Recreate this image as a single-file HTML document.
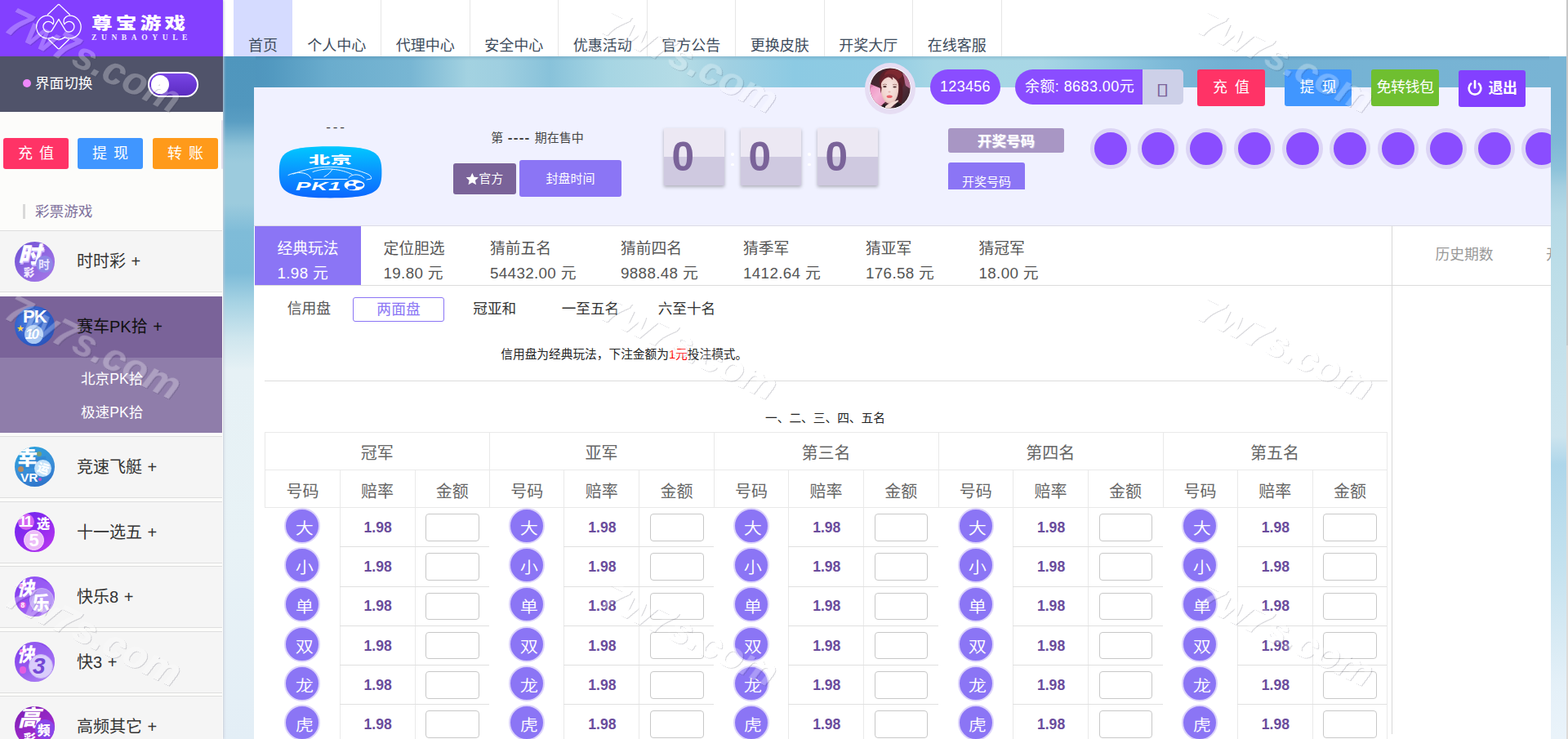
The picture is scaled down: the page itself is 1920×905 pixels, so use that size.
<!DOCTYPE html>
<html lang="zh-CN"><head><meta charset="utf-8"><title>尊宝游戏</title>
<style>
*{box-sizing:border-box;margin:0;padding:0}
html,body{width:1920px;height:905px;overflow:hidden;background:#fff}
body{font-family:"Liberation Sans","Noto Sans CJK SC",sans-serif;color:#333;position:relative}
.abs{position:absolute}
#bg{position:absolute;left:273px;top:69px;width:1647px;height:836px;background:#9fcde0}
#bgt{position:absolute;left:273px;top:69px;width:1647px;height:40px;background:
 linear-gradient(180deg,rgba(40,90,130,.18) 0px,rgba(40,90,130,0) 5px),
 linear-gradient(90deg,#4a8fb8 0px,#5299c0 60px,#6aaccd 130px,#78b6d3 230px,#a3d2e1 300px,#9fcfe0 340px,#88c2da 400px,#a6d5e3 470px,#b5dce6 560px,#a0d0e2 620px,#8ccae3 700px,#8fcbe3 800px,#a6d6e5 870px,#a8d7e5 1000px,#92c9e0 1080px,#7cb9d8 1160px,#72b0d3 1230px,#76b3d4 1400px,#79b4d4 1647px)}
#bgl{position:absolute;left:273px;top:69px;width:40px;height:836px;background:
 linear-gradient(180deg,#4f96bd 0px,#5197be 60px,#5a9ec3 80px,#8fc3d8 110px,#9ccbdd 130px,#9ccbdd 180px,#7fbcd8 215px,#7dbbd8 265px,#a5d2e3 300px,#cfe6ee 345px,#e6f1f5 385px,#e8f2f6 600px,#e3eef6 836px)}
#bgr{position:absolute;left:1897px;top:69px;width:23px;height:836px;background:
 linear-gradient(180deg,#79b4d4 0px,#79b4d4 60px,#7fb8d6 105px,#8cc2da 138px,#a5cfe0 160px,#b5d9e6 193px,#bbdde8 249px,#c3e0ea 340px,#c9e3ed 420px,#cde4ee 465px,#aed6ea 500px,#b9dcec 560px,#c5e2ef 630px,#d5e9f3 700px,#e4f0f8 770px,#eaf3fa 836px)}
#sbar{position:absolute;left:1918px;top:0;width:2px;height:905px;background:#dedbd8;z-index:9}
#sbar i{position:absolute;left:0;top:0;width:2px;height:423px;background:#c8c8c8}
#side{position:absolute;left:0;top:0;width:273px;height:905px;background:#fcfcfa;box-shadow:1px 0 3px rgba(200,202,215,.95);z-index:5}
#logo{position:absolute;left:0;top:0;width:273px;height:69px;background:#8340ff}
#sw{position:absolute;left:0;top:69px;width:273px;height:68px;background:#50536a}
#topnav{position:absolute;left:273px;top:0;width:1647px;height:69px;background:#fff;z-index:2}
.nv{position:absolute;top:0;height:69px;font-size:18px;color:#3d4b5c;line-height:18px;padding-top:46.5px;text-align:center;border-right:1px solid #e6e6e6;white-space:nowrap}
#panel{position:absolute;left:311px;top:107px;width:1588px;height:798px;background:#f0f1ff;z-index:1;overflow:hidden}
.btn{position:absolute;color:#fff;text-align:center;border-radius:3px;white-space:nowrap}
.mi{position:absolute;left:0;width:272px;height:76px;background:#f5f5f5;border-top:1px solid #dedede;border-bottom:1px solid #dedede}
.mi .t{position:absolute;left:94px;top:0;line-height:74px;font-size:20px;color:#333;white-space:nowrap}
.pl{font-size:20px;margin-left:6.5px}
.ball{position:absolute;width:44px;height:44px;border-radius:50%;background:#8b75f5;border:2px solid #dcd3fb;color:#fff;font-size:19.8px;font-weight:350;line-height:43.5px;text-align:center;padding-left:5.4px;font-family:'Noto Sans CJK SC',sans-serif}
.ball span{display:inline-block;transform:scaleX(1.12)}
.wm{position:absolute;width:240px;height:56px;line-height:56px;text-align:center;font-size:48px;font-weight:700;font-style:italic;color:rgba(255,255,255,.26);text-shadow:1px 1px 1px rgba(60,60,80,.055);transform:rotate(29deg);z-index:20;white-space:nowrap;pointer-events:none}
.od{position:absolute;width:92.5px;text-align:center;font-size:17.6px;font-weight:700;line-height:24px;color:#6a4c9c}
.inp{position:absolute;width:65.6px;height:33.6px;border:1px solid #c8c8c8;border-radius:4px;background:#fff}
.ic{position:absolute;left:18px;width:49px;height:49px;border-radius:50%;overflow:hidden}
</style></head>
<body>
<div id="bg"></div><div id="bgt"></div><div id="bgl"></div><div id="bgr"></div><div id="sbar"><i></i></div>
<div id="topnav">
<div class="nv" style="left:13.0px;width:72px;background:#d5dbff;border-right:none">首页</div>
<div class="nv" style="left:85.3px;width:109px">个人中心</div>
<div class="nv" style="left:193.8px;width:109px">代理中心</div>
<div class="nv" style="left:302.3px;width:109px">安全中心</div>
<div class="nv" style="left:410.8px;width:109px">优惠活动</div>
<div class="nv" style="left:519.3px;width:109px">官方公告</div>
<div class="nv" style="left:627.8px;width:109px">更换皮肤</div>
<div class="nv" style="left:736.3px;width:109px">开奖大厅</div>
<div class="nv" style="left:844.8px;width:109px">在线客服</div>
</div>
<div id="side">
<div id="logo">
<svg class="abs" style="left:40px;top:2px" width="64" height="64" viewBox="40 2 64 64" fill="none" stroke="#fff" stroke-width="1.3" stroke-linecap="round" stroke-linejoin="round">
<path d="M58.3 18 L70.7 6.1 Q71.9 5 73.1 6.1 L85.5 18"/>
<path d="M59.4 48.2 L70.7 59.2 Q71.9 60.3 73.1 59.2 L84.4 48.2"/>
<path d="M71.9 23.7 L63.6 37.4 A6.4 6.4 0 1 1 64.9 29.7 C66.3 26.5 66 22.8 62.8 20.6 C61.3 19.6 59.8 19.2 58.5 19.2 A13.9 13.9 0 1 0 64 45.9"/>
<path d="M71.9 23.7 L80.2 37.4 A6.4 6.4 0 1 0 78.9 29.7 C77.5 26.5 77.8 22.8 81 20.6 C82.5 19.6 84 19.2 85.3 19.2 A13.9 13.9 0 1 1 79.8 45.9"/>
<path d="M64.2 45.4 Q71.9 51.6 79.6 45.4" stroke-width="1.7"/>
</svg>
<div class="abs" style="left:112px;top:12px;font-family:'Noto Sans CJK SC','Liberation Sans',sans-serif;font-weight:900;font-size:20.5px;line-height:30px;letter-spacing:3.4px;color:#fff;white-space:nowrap;transform:scaleX(1.25);transform-origin:0 50%">尊宝游戏</div>
<div class="abs" style="left:112px;top:39px;font-family:'Liberation Serif',serif;font-weight:700;font-size:9.5px;line-height:14px;letter-spacing:5.6px;color:#f0e8ff;white-space:nowrap">ZUNBAOYULE</div>
</div>
<div id="sw">
<div class="abs" style="left:28px;top:28px;width:10px;height:10px;border-radius:50%;background:#ee88fa"></div>
<div class="abs" style="left:43px;top:20px;font-size:17.6px;line-height:26px;color:#fff;white-space:nowrap">界面切换</div>
<div class="abs" style="left:181px;top:19px;width:62px;height:31px;border-radius:16px;border:2px solid #fff;background:linear-gradient(180deg,#7a46e6 0%,#6a38d4 50%,#5b2cc0 100%)"><div class="abs" style="left:2px;top:2px;width:22px;height:23px;border-radius:50%;background:#fff"></div></div>
</div>

<div class="abs" style="left:271px;top:147px;width:2px;height:60px;background:#e4e0ee;border-radius:1px"></div>
<div class="btn" style="left:4px;top:169px;width:80px;height:38px;line-height:38px;font-size:18px;letter-spacing:1.5px;padding-left:1.5px;background:#ff3366">充 值</div>
<div class="btn" style="left:95px;top:169px;width:80px;height:38px;line-height:38px;font-size:18px;letter-spacing:1.5px;padding-left:1.5px;background:#4096ff">提 现</div>
<div class="btn" style="left:187px;top:169px;width:80px;height:38px;line-height:38px;font-size:18px;letter-spacing:1.5px;padding-left:1.5px;background:#ff9a1a">转 账</div>
<div class="abs" style="left:28px;top:250px;width:3px;height:18px;background:#d9d9d9"></div>
<div class="abs" style="left:43px;top:246px;font-size:17.6px;line-height:26px;color:#7d6f9b;white-space:nowrap">彩票游戏</div>

<div class="mi" style="top:282px"><div class="ic" style="top:12.8px;background:linear-gradient(135deg,#6a4fd0 0%,#8e66e0 50%,#a77ae8 100%)"><span class="abs" style="left:4px;top:-2px;font-size:28px;line-height:32px;font-weight:900;font-style:italic;color:#fff;font-family:'Noto Sans CJK SC',sans-serif;text-shadow:1px 2px 0 #c9b6ff">时</span><span class="abs" style="left:26px;top:17px;width:21px;height:21px;border-radius:50%;background:#8f86e6"></span><span class="abs" style="left:29px;top:19px;font-size:14px;line-height:18px;font-weight:700;color:#e8e4ff">时</span><span class="abs" style="left:11px;top:31px;font-size:13px;line-height:14px;font-weight:900;color:#f3eaff">彩</span></div><div class="t">时时彩<span class="pl">+</span></div></div>
<div class="mi" style="top:363px;height:76px;background:#7a6399;border:none"><div class="ic" style="top:11.5px;background:radial-gradient(circle at 40% 40%,#4a7ee0 0%,#2f5ec8 55%,#2448a8 100%)"><span class="abs" style="left:10px;top:0px;font-size:22px;line-height:26px;font-weight:700;color:#fff;letter-spacing:-1px">PK</span><span class="abs" style="left:12px;top:23.5px;width:23px;height:23px;border-radius:50%;background:#a9c8f3"></span><span class="abs" style="left:13px;top:25.5px;font-size:17px;line-height:20px;font-weight:700;font-style:italic;color:#fff;letter-spacing:-2px">10</span><span class="abs" style="left:2.5px;top:22px;font-size:9px;line-height:10px;color:#ffd84a">★</span></div><div class="t" style="color:#111;line-height:74px">赛车PK拾<span class="pl">+</span></div></div>
<div class="abs" style="left:0;top:438px;width:272px;height:92px;background:#8f7daa"></div>
<div class="abs" style="left:99px;top:451px;font-size:17.6px;line-height:26px;color:#fff;white-space:nowrap">北京PK拾</div>
<div class="abs" style="left:99px;top:491.5px;font-size:17.6px;line-height:26px;color:#fff;white-space:nowrap">极速PK拾</div>
<div class="mi" style="top:534.0px"><div class="ic" style="top:12.2px;background:linear-gradient(160deg,#2aa4dc 0%,#3a8ed8 55%,#2a6cc6 100%)"><span class="abs" style="left:5px;top:14px;width:34px;height:12px;background:#2f7fd0;opacity:.55;transform:rotate(-8deg)"></span><span class="abs" style="left:27px;top:6px;width:6px;height:6px;border-radius:50%;background:#8aa060;opacity:.8"></span><span class="abs" style="left:4px;top:23.5px;width:7px;height:7px;border-radius:50%;background:#c88a50;opacity:.85"></span><span class="abs" style="left:29px;top:37.5px;width:4.4px;height:4.4px;border-radius:50%;background:#c050c8"></span><span class="abs" style="left:3px;top:-3px;font-size:25px;line-height:28px;font-weight:900;color:#fff;font-family:'Noto Sans CJK SC',sans-serif">幸</span><span class="abs" style="left:23.8px;top:15.5px;width:21.6px;height:21.6px;border-radius:50%;background:#c4e2fa"></span><span class="abs" style="left:27.5px;top:18px;font-size:14.5px;line-height:16px;font-weight:900;color:#fff;transform:rotate(18deg);font-family:'Noto Sans CJK SC',sans-serif">运</span><span class="abs" style="left:7px;top:29.5px;font-size:15.5px;line-height:16px;font-weight:700;color:#fff">VR</span></div><div class="t">竞速飞艇<span class="pl">+</span></div></div>
<div class="mi" style="top:613.5px"><div class="ic" style="top:12.2px;background:linear-gradient(140deg,#6a28f0 0%,#8a28ee 45%,#c038f0 100%)"><span class="abs" style="left:4.4px;top:2.1px;width:20px;height:20px;border-radius:50%;background:#d264f2"></span><span class="abs" style="left:4.5px;top:2px;font-size:19px;line-height:20px;font-weight:700;color:#fff;letter-spacing:-2.2px">11</span><span class="abs" style="left:27px;top:4.5px;font-size:16px;line-height:18px;font-weight:900;color:#fff;font-family:'Noto Sans CJK SC',sans-serif">选</span><span class="abs" style="left:11.3px;top:22.1px;width:24.8px;height:24.8px;border-radius:50%;background:#ecbcf8;border:1.5px solid #f6dcfc"></span><span class="abs" style="left:17.5px;top:23px;font-size:22px;line-height:24px;font-weight:700;color:#fff">5</span></div><div class="t">十一选五<span class="pl">+</span></div></div>
<div class="mi" style="top:693.0px"><div class="ic" style="top:12.2px;background:linear-gradient(150deg,#7a30ee 0%,#9450f2 50%,#ae7cf6 100%)"><span class="abs" style="left:6px;top:6px;width:60px;height:14px;background:#a470f8;opacity:.45;transform:rotate(30deg)"></span><span class="abs" style="left:3px;top:0px;font-size:23px;line-height:26px;font-weight:900;font-style:italic;color:#fff;font-family:'Noto Sans CJK SC',sans-serif;transform:scaleX(.9);transform-origin:0 0">快</span><span class="abs" style="left:17.5px;top:13.5px;width:30px;height:30px;border-radius:50%;background:#b898f6;border:1.5px solid #c9b0f8"></span><span class="abs" style="left:21.5px;top:19px;font-size:21.5px;line-height:24px;font-weight:900;color:#fff;font-family:'Noto Sans CJK SC',sans-serif">乐</span><span class="abs" style="left:5.6px;top:30.6px;width:8.6px;height:8.6px;border-radius:50%;background:#e45ce0"></span><span class="abs" style="left:7.6px;top:30.4px;font-size:8.5px;line-height:9px;font-weight:700;color:#fff">8</span><span class="abs" style="left:5.5px;top:8.5px;width:4.6px;height:4.6px;border-radius:50%;background:#f07ae0"></span></div><div class="t">快乐8<span class="pl">+</span></div></div>
<div class="mi" style="top:772.5px"><div class="ic" style="top:12.2px;background:linear-gradient(150deg,#7a36ea 0%,#9458ee 50%,#b088f4 100%)"><span class="abs" style="left:6px;top:6px;width:60px;height:14px;background:#a476f6;opacity:.45;transform:rotate(30deg)"></span><span class="abs" style="left:3px;top:1px;font-size:23px;line-height:26px;font-weight:900;font-style:italic;color:#fff;font-family:'Noto Sans CJK SC',sans-serif;transform:scaleX(.9);transform-origin:0 0">快</span><span class="abs" style="left:16.5px;top:15.5px;width:30px;height:30px;border-radius:50%;background:#dacdfb;border:1.5px solid #c4b0f6"></span><span class="abs" style="left:22px;top:15.5px;font-size:28px;line-height:30px;font-weight:700;font-style:italic;color:#7448d6">3</span><span class="abs" style="left:5.6px;top:30.6px;width:8.6px;height:8.6px;border-radius:50%;background:#e45ce0"></span><span class="abs" style="left:5.5px;top:9px;width:4.6px;height:4.6px;border-radius:50%;background:#f07ae0"></span></div><div class="t">快3<span class="pl">+</span></div></div>
<div class="mi" style="top:851.5px"><div class="ic" style="top:12.2px;background:linear-gradient(150deg,#7a1cb0 0%,#9a28c8 55%,#b040d8 100%)"><span class="abs" style="left:4px;top:-2px;font-size:27.5px;line-height:28px;font-weight:900;font-style:italic;color:#fff;font-family:'Noto Sans CJK SC',sans-serif">高</span><span class="abs" style="left:24.5px;top:16px;width:24px;height:24px;border-radius:50%;background:#8846e8"></span><span class="abs" style="left:28px;top:19px;font-size:15.5px;line-height:18px;font-weight:900;color:#fff;font-family:'Noto Sans CJK SC',sans-serif">频</span><span class="abs" style="left:11px;top:30px;font-size:15px;line-height:17px;font-weight:900;color:#fff;font-family:'Noto Sans CJK SC',sans-serif">彩</span></div><div class="t">高频其它<span class="pl">+</span></div></div>
</div>

<div id="ubar" class="abs" style="left:0;top:0;width:1920px;height:0;z-index:3">
<div class="abs" style="left:1059px;top:77.3px;width:62px;height:62.5px;border-radius:50%;background:#e6ddf3"></div>
<svg class="abs" style="left:1064px;top:82.3px" width="52" height="52" viewBox="-1 -1 52 52">
<defs><clipPath id="avc"><circle cx="25" cy="25" r="24.6"/></clipPath>
<linearGradient id="avb" x1="0" y1="0" x2="1" y2="1"><stop offset="0" stop-color="#3a2229"/><stop offset=".35" stop-color="#4a2832"/><stop offset=".6" stop-color="#5a2f3c"/><stop offset="1" stop-color="#2c2026"/></linearGradient>
<linearGradient id="avp" x1="0" y1="0" x2="1" y2="1"><stop offset="0" stop-color="#f08cc0"/><stop offset=".5" stop-color="#f4b4d6"/><stop offset="1" stop-color="#e890b8"/></linearGradient>
<radialGradient id="avf" cx=".5" cy=".45" r=".6"><stop offset="0" stop-color="#f8e6e2"/><stop offset=".7" stop-color="#f1d4ce"/><stop offset="1" stop-color="#e2b2ac"/></radialGradient></defs>
<circle cx="25" cy="25" r="25.6" fill="#fff"/>
<g clip-path="url(#avc)">
<rect x="0" y="0" width="50" height="50" fill="url(#avb)"/>
<path d="M-2 19 L13 25 L20 41 L10 50 L-2 50 Z" fill="url(#avp)"/>
<path d="M-2 19 L13 25 L5 22 L-2 27 Z" fill="#c96a9a" opacity=".6"/>
<path d="M40 6 L50 14 L50 26 L44 22 Z" fill="#c77aa2" opacity=".85"/>
<ellipse cx="27" cy="16" rx="15.5" ry="15" fill="#5c2029"/>
<ellipse cx="29" cy="8.5" rx="11" ry="6.5" fill="#8a2c34" opacity=".75"/>
<path d="M36 16 C42 21 41 35 38.5 44 L34.5 40 Z" fill="#4e1c25"/>
<path d="M13.8 21 C13.2 30 15.2 38 19.6 42 C22.6 44.6 26.6 44.6 29.6 42 C34 38 35.8 30 35.2 21 C34.7 12 28 9.5 24.5 9.5 C21 9.5 14.3 12 13.8 21 Z" fill="url(#avf)"/>
<path d="M13 21 C13 12 18.5 7 25 7.5 C31.5 8 36 12 36.2 21.5 C34 16.5 31.5 12.8 27.5 11.5 C28 12.5 28.5 14 28 15 C26.5 13 24.5 11.8 22.5 11.6 C18.5 12.5 15 16 13 21 Z" fill="#6a242d"/>
<path d="M13.2 21 C12.6 25 13 29 13.8 31.5 L14.6 24 Z" fill="#6a242d"/>
<ellipse cx="18.4" cy="23.2" rx="2.2" ry="1.1" fill="#5a3a3a"/><ellipse cx="30.6" cy="23.5" rx="2.2" ry="1.1" fill="#5a3a3a"/>
<path d="M15.8 20.8 Q18.5 19.6 21 20.6 M28 20.8 Q30.8 19.8 33.4 21" stroke="#8a5a56" stroke-width=".7" fill="none"/>
<ellipse cx="24" cy="29.6" rx="1.6" ry="1" fill="#e2b6ae"/>
<ellipse cx="24.2" cy="35.3" rx="3.6" ry="1.8" fill="#e8666c"/>
<path d="M30 50 L33 42 L41 46 L46 50 Z" fill="#231c20"/>
<path d="M14 50 L17 44 L22 46 L20 50 Z" fill="#231c20"/>
<path d="M19 47 C24 43 30 41 35 39.5 C36 41 33 43 30 45 C28 47 26 49 24 50 L19 50 Z" fill="#f3d9d3"/>
<path d="M5 40 C7 42 9 45 9 48 L6 47 Z" fill="#f5d6d8"/>
</g></svg>
<div class="abs" style="left:1139px;top:85px;width:86px;height:43px;border-radius:22px;background:#8a4dff;color:#fff;font-size:18px;line-height:43px;text-align:center;letter-spacing:0.3px">123456</div>
<div class="abs" style="left:1243px;top:85px;width:156px;height:43px;border-radius:22px 0 0 22px;background:#8a4dff;color:#fff;font-size:18px;line-height:43px;padding-left:12px;white-space:nowrap;letter-spacing:0.42px">余额: 8683.00元</div>
<div class="abs" style="left:1399px;top:85px;width:50px;height:43px;border-radius:0 5px 5px 0;background:#cdd0e8"></div>
<div class="abs" style="left:1413px;top:98.5px;width:21px;height:22px;line-height:22px;text-align:center;font-family:'DejaVu Sans',sans-serif;font-size:19.8px;color:#7a6399;transform:scaleX(1.5)">▯</div>
<div class="btn" style="left:1466px;top:85px;width:83px;height:45px;line-height:45px;font-size:18px;letter-spacing:2px;padding-left:2px;background:#ff3366">充 值</div>
<div class="btn" style="left:1573px;top:85px;width:82px;height:45px;line-height:45px;font-size:18px;letter-spacing:2px;padding-left:2px;background:#4096ff">提 现</div>
<div class="btn" style="left:1679px;top:85px;width:83px;height:45px;line-height:45px;font-size:18px;background:#6fbf30;letter-spacing:-0.5px">免转钱包</div>
<div class="btn" style="left:1786px;top:86px;width:82px;height:45px;line-height:44px;font-size:18px;font-weight:700;background:#8340ff;padding-left:26px;letter-spacing:-0.5px">退出
<svg class="abs" style="left:9px;top:11px" width="22" height="22" viewBox="0 0 22 22" fill="none" stroke="#fff" stroke-width="2.6" stroke-linecap="round"><path d="M6.2 5.6 A7.4 7.4 0 1 0 15.8 5.6"/><path d="M11 2.2 V10.5"/></svg>
</div>
</div>

<div id="panel">
<div class="abs" style="left:81px;top:41px;width:40px;text-align:center;font-size:17px;line-height:16px;letter-spacing:2.8px;color:#444;white-space:nowrap">---</div>
<svg class="abs" style="left:30px;top:71px" width="128" height="66" viewBox="0 0 128 66">
<defs><linearGradient id="pkg" x1="0" y1="0" x2="0" y2="1"><stop offset="0" stop-color="#00c8ff"/><stop offset=".5" stop-color="#0a94ff"/><stop offset="1" stop-color="#0a66ff"/></linearGradient></defs>
<path fill="url(#pkg)" d="M0.8 32.8 C0.8 9.5 7 1.2 63.6 1.2 C120.2 1.2 126.4 9.5 126.4 32.8 C126.4 56.1 120.2 64.4 63.6 64.4 C7 64.4 0.8 56.1 0.8 32.8 Z"/>
<text x="63.5" y="21.6" text-anchor="middle" fill="#fff" font-family="Noto Sans CJK SC,sans-serif" font-weight="900" font-size="13" transform="translate(63.5 0) scale(2.04 1) translate(-63.5 0)">北京</text>
<g fill="none" stroke="#e6f5ff" stroke-width="1" stroke-linecap="round" stroke-linejoin="round"><path d="M12 36.5 C20 32.5 30 32.5 36 36 C38 37.3 39 38.6 39.5 40"/><path d="M18 35 C36 28 52 25.5 70 26.5 C86 27.4 100 31 110 35.5 C113 37 114 39 113.5 41 L108 42"/><path d="M43 41.5 H84"/><path d="M86 39.5 C90 34.5 100 34.5 105 40"/><path d="M42 32.5 C52 28.8 62 28.5 66 29.2 C64 32.5 61 36 56 38.5"/><path d="M66 29.2 C76 30 84 32.5 90 35.5"/></g>
<text x="21.5" y="55.2" fill="#fff" font-family="Liberation Sans,sans-serif" font-weight="700" font-style="italic" font-size="15.4" letter-spacing=".4" transform="translate(22 0) scale(1.8 1) translate(-22 0)">PK1</text>
<ellipse cx="93" cy="48.8" rx="12.4" ry="6.5" fill="#fff"/>
<ellipse cx="89" cy="45.6" rx="3.2" ry="1.7" fill="#0a76ff"/><ellipse cx="99.2" cy="48.2" rx="4.6" ry="2.5" fill="#0a72ff"/><ellipse cx="89.6" cy="51.8" rx="5" ry="2.5" fill="#0a70ff"/>
</svg>
<div class="abs" style="left:232px;top:51px;width:230px;text-align:center;font-size:15px;line-height:22px;color:#444;white-space:nowrap">第 <b style="letter-spacing:1.3px;margin-left:1.3px;margin-right:1px;font-size:17px;line-height:15px">----</b> 期在售中</div>
<div class="btn" style="left:244px;top:93px;width:77px;height:38px;line-height:37px;font-size:15px;background:#7a6399"><svg width="16.5" height="16.5" viewBox="0 0 20 20" style="vertical-align:-3px;margin-right:0px;margin-left:-1px"><path fill="#fff" d="M10 0.8l2.7 6.1 6.6 0.7-4.9 4.5 1.4 6.5L10 15.3 4.2 18.6l1.4-6.5L0.7 7.6l6.6-0.7z"/></svg>官方</div>
<div class="btn" style="left:325px;top:89px;width:125px;height:45px;line-height:45px;font-size:15px;background:#8b75f5">封盘时间</div>
<div class="abs" style="left:501.7px;top:49.7px;width:74.6px;height:70.6px;background:linear-gradient(180deg,#ece8f3 0%,#ece8f3 49.5%,#cfc9e0 49.5%,#cfc9e0 100%);box-shadow:0 2px 4px rgba(0,0,0,.28);font-size:49.5px;font-weight:700;color:#7a6399;line-height:70px;padding-left:9.8px">0</div>
<div class="abs" style="left:595.7px;top:49.7px;width:74.6px;height:70.6px;background:linear-gradient(180deg,#ece8f3 0%,#ece8f3 49.5%,#cfc9e0 49.5%,#cfc9e0 100%);box-shadow:0 2px 4px rgba(0,0,0,.28);font-size:49.5px;font-weight:700;color:#7a6399;line-height:70px;padding-left:9.8px">0</div>
<div class="abs" style="left:689.7px;top:49.7px;width:74.6px;height:70.6px;background:linear-gradient(180deg,#ece8f3 0%,#ece8f3 49.5%,#cfc9e0 49.5%,#cfc9e0 100%);box-shadow:0 2px 4px rgba(0,0,0,.28);font-size:49.5px;font-weight:700;color:#7a6399;line-height:70px;padding-left:9.8px">0</div>
<div class="abs" style="left:584.0px;top:80.2px;width:3.6px;height:3.6px;border-radius:50%;background:#fff"></div>
<div class="abs" style="left:584.0px;top:92.9px;width:3.6px;height:3.6px;border-radius:50%;background:#fff"></div>
<div class="abs" style="left:678.0px;top:80.2px;width:3.6px;height:3.6px;border-radius:50%;background:#fff"></div>
<div class="abs" style="left:678.0px;top:92.9px;width:3.6px;height:3.6px;border-radius:50%;background:#fff"></div>
<div class="btn" style="left:850px;top:50px;width:142px;height:30px;line-height:32px;font-size:17.6px;font-weight:700;background:#a896c4;text-shadow:1px 1px 1px rgba(255,255,255,.5)">开奖号码</div>
<div class="btn" style="left:850px;top:92px;width:94px;height:33px;line-height:47px;font-size:15px;background:#8b75f5;border-radius:3px 3px 0 0;overflow:hidden">开奖号码</div>
<div class="abs" style="left:1023.7px;top:49.7px;width:50px;height:50px;border-radius:50%;background:#8a4dff;border:5px solid #dcd5f5"></div>
<div class="abs" style="left:1082.4px;top:49.7px;width:50px;height:50px;border-radius:50%;background:#8a4dff;border:5px solid #dcd5f5"></div>
<div class="abs" style="left:1141.2px;top:49.7px;width:50px;height:50px;border-radius:50%;background:#8a4dff;border:5px solid #dcd5f5"></div>
<div class="abs" style="left:1199.9px;top:49.7px;width:50px;height:50px;border-radius:50%;background:#8a4dff;border:5px solid #dcd5f5"></div>
<div class="abs" style="left:1258.6px;top:49.7px;width:50px;height:50px;border-radius:50%;background:#8a4dff;border:5px solid #dcd5f5"></div>
<div class="abs" style="left:1317.3px;top:49.7px;width:50px;height:50px;border-radius:50%;background:#8a4dff;border:5px solid #dcd5f5"></div>
<div class="abs" style="left:1376.1px;top:49.7px;width:50px;height:50px;border-radius:50%;background:#8a4dff;border:5px solid #dcd5f5"></div>
<div class="abs" style="left:1434.8px;top:49.7px;width:50px;height:50px;border-radius:50%;background:#8a4dff;border:5px solid #dcd5f5"></div>
<div class="abs" style="left:1493.5px;top:49.7px;width:50px;height:50px;border-radius:50%;background:#8a4dff;border:5px solid #dcd5f5"></div>
<div class="abs" style="left:1552.3px;top:49.7px;width:50px;height:50px;border-radius:50%;background:#8a4dff;border:5px solid #dcd5f5"></div>
<div class="abs" style="left:0;top:169px;width:1588px;height:640px;background:#fff;border-top:1px solid #dcdce6"></div>
<div class="abs" style="left:1px;top:242px;width:1587px;height:1px;background:#dcdcdc"></div>
<div class="abs" style="left:1393px;top:170px;width:1px;height:622px;background:#d8d8d8"></div>
<div class="abs" style="left:1px;top:170px;width:130px;height:72px;background:#8b75f5"></div>
<div class="abs" style="left:28.5px;top:183px;font-size:18.8px;line-height:30px;color:#fff;white-space:nowrap">经典玩法<br><span style="letter-spacing:.35px">1.98 元</span></div>
<div class="abs" style="left:158.5px;top:183px;font-size:18.8px;line-height:30px;color:#555;white-space:nowrap">定位胆选<br><span style="letter-spacing:.35px">19.80 元</span></div>
<div class="abs" style="left:289.0px;top:183px;font-size:18.8px;line-height:30px;color:#555;white-space:nowrap">猜前五名<br><span style="letter-spacing:.35px">54432.00 元</span></div>
<div class="abs" style="left:449.0px;top:183px;font-size:18.8px;line-height:30px;color:#555;white-space:nowrap">猜前四名<br><span style="letter-spacing:.35px">9888.48 元</span></div>
<div class="abs" style="left:599.0px;top:183px;font-size:18.8px;line-height:30px;color:#555;white-space:nowrap">猜季军<br><span style="letter-spacing:.35px">1412.64 元</span></div>
<div class="abs" style="left:749.0px;top:183px;font-size:18.8px;line-height:30px;color:#555;white-space:nowrap">猜亚军<br><span style="letter-spacing:.35px">176.58 元</span></div>
<div class="abs" style="left:887.5px;top:183px;font-size:18.8px;line-height:30px;color:#555;white-space:nowrap">猜冠军<br><span style="letter-spacing:.35px">18.00 元</span></div>
<div class="abs" style="left:1446.5px;top:192px;font-size:17.8px;line-height:26px;color:#999;white-space:nowrap">历史期数</div>
<div class="abs" style="left:1582.0px;top:192px;font-size:17.8px;line-height:26px;color:#999;white-space:nowrap">开奖</div>
<div class="abs" style="left:40.7px;top:258px;font-size:17.8px;line-height:26px;color:#555;white-space:nowrap">信用盘</div>
<div class="abs" style="left:121.3px;top:257.3px;width:111.5px;height:29.5px;border:1px solid #8b75f5;border-radius:3px;font-size:17.8px;line-height:26px;color:#8b75f5;text-align:center;padding-top:.6px">两面盘</div>
<div class="abs" style="left:268.3px;top:258px;font-size:17.6px;line-height:26px;color:#333;white-space:nowrap">冠亚和</div>
<div class="abs" style="left:376.7px;top:258px;font-size:17.6px;line-height:26px;color:#333;white-space:nowrap">一至五名</div>
<div class="abs" style="left:494.7px;top:258px;font-size:17.6px;line-height:26px;color:#333;white-space:nowrap">六至十名</div>
<div class="abs" style="left:302.3px;top:316px;font-size:14.7px;line-height:22px;color:#222;white-space:nowrap">信用盘为经典玩法，下注金额为<span style="color:#f00">1元</span>投注模式。</div>
<div class="abs" style="left:13px;top:359px;width:1375px;height:1px;background:#dcdcdc"></div>
<div class="abs" style="left:12px;top:394px;width:1375px;text-align:center;font-size:14.7px;line-height:22px;color:#222;white-space:nowrap">一、二、三、四、五名</div>
<div class="abs" style="left:13px;top:422px;width:1374px;height:1px;background:#e9e9e9"></div>
<div class="abs" style="left:13px;top:468px;width:1374px;height:1px;background:#e9e9e9"></div>
<div class="abs" style="left:13px;top:514px;width:1374px;height:1px;background:#e9e9e9"></div>
<div class="abs" style="left:13px;top:422px;width:1px;height:92px;background:#e9e9e9"></div>
<div class="abs" style="left:105px;top:468px;width:1px;height:330px;background:#e9e9e9"></div>
<div class="abs" style="left:197px;top:468px;width:1px;height:330px;background:#e9e9e9"></div>
<div class="abs" style="left:13.4px;top:433.2px;width:274.8px;text-align:center;font-size:20px;line-height:30px;color:#666">冠军</div>
<div class="abs" style="left:19.4px;top:479.5px;width:80px;text-align:center;font-size:20px;line-height:30px;color:#666">号码</div>
<div class="abs" style="left:111.0px;top:479.5px;width:80px;text-align:center;font-size:20px;line-height:30px;color:#666">赔率</div>
<div class="abs" style="left:202.7px;top:479.5px;width:80px;text-align:center;font-size:20px;line-height:30px;color:#666">金额</div>
<div class="abs" style="left:105px;top:562px;width:183px;height:1px;background:#e0e0e0"></div>
<div class="ball" style="left:37.1px;top:514.8px"><span>大</span></div>
<div class="od" style="left:105.4px;top:526.8px">1.98</div>
<div class="inp" style="left:210.2px;top:522.2px"></div>
<div class="abs" style="left:105px;top:611px;width:183px;height:1px;background:#e0e0e0"></div>
<div class="ball" style="left:37.1px;top:563.0px"><span>小</span></div>
<div class="od" style="left:105.4px;top:575.0px">1.98</div>
<div class="inp" style="left:210.2px;top:570.4px"></div>
<div class="abs" style="left:105px;top:659px;width:183px;height:1px;background:#e0e0e0"></div>
<div class="ball" style="left:37.1px;top:611.3px"><span>单</span></div>
<div class="od" style="left:105.4px;top:623.3px">1.98</div>
<div class="inp" style="left:210.2px;top:618.7px"></div>
<div class="abs" style="left:105px;top:707px;width:183px;height:1px;background:#e0e0e0"></div>
<div class="ball" style="left:37.1px;top:659.5px"><span>双</span></div>
<div class="od" style="left:105.4px;top:671.5px">1.98</div>
<div class="inp" style="left:210.2px;top:666.9px"></div>
<div class="abs" style="left:105px;top:755px;width:183px;height:1px;background:#e0e0e0"></div>
<div class="ball" style="left:37.1px;top:707.8px"><span>龙</span></div>
<div class="od" style="left:105.4px;top:719.8px">1.98</div>
<div class="inp" style="left:210.2px;top:715.2px"></div>
<div class="abs" style="left:105px;top:804px;width:183px;height:1px;background:#e0e0e0"></div>
<div class="ball" style="left:37.1px;top:756.0px"><span>虎</span></div>
<div class="od" style="left:105.4px;top:768.0px">1.98</div>
<div class="inp" style="left:210.2px;top:763.4px"></div>
<div class="abs" style="left:288px;top:422px;width:1px;height:92px;background:#e9e9e9"></div>
<div class="abs" style="left:379px;top:468px;width:1px;height:330px;background:#e9e9e9"></div>
<div class="abs" style="left:471px;top:468px;width:1px;height:330px;background:#e9e9e9"></div>
<div class="abs" style="left:288.2px;top:433.2px;width:274.8px;text-align:center;font-size:20px;line-height:30px;color:#666">亚军</div>
<div class="abs" style="left:294.2px;top:479.5px;width:80px;text-align:center;font-size:20px;line-height:30px;color:#666">号码</div>
<div class="abs" style="left:385.8px;top:479.5px;width:80px;text-align:center;font-size:20px;line-height:30px;color:#666">赔率</div>
<div class="abs" style="left:477.5px;top:479.5px;width:80px;text-align:center;font-size:20px;line-height:30px;color:#666">金额</div>
<div class="abs" style="left:379px;top:562px;width:184px;height:1px;background:#e0e0e0"></div>
<div class="ball" style="left:311.9px;top:514.8px"><span>大</span></div>
<div class="od" style="left:380.2px;top:526.8px">1.98</div>
<div class="inp" style="left:485.0px;top:522.2px"></div>
<div class="abs" style="left:379px;top:611px;width:184px;height:1px;background:#e0e0e0"></div>
<div class="ball" style="left:311.9px;top:563.0px"><span>小</span></div>
<div class="od" style="left:380.2px;top:575.0px">1.98</div>
<div class="inp" style="left:485.0px;top:570.4px"></div>
<div class="abs" style="left:379px;top:659px;width:184px;height:1px;background:#e0e0e0"></div>
<div class="ball" style="left:311.9px;top:611.3px"><span>单</span></div>
<div class="od" style="left:380.2px;top:623.3px">1.98</div>
<div class="inp" style="left:485.0px;top:618.7px"></div>
<div class="abs" style="left:379px;top:707px;width:184px;height:1px;background:#e0e0e0"></div>
<div class="ball" style="left:311.9px;top:659.5px"><span>双</span></div>
<div class="od" style="left:380.2px;top:671.5px">1.98</div>
<div class="inp" style="left:485.0px;top:666.9px"></div>
<div class="abs" style="left:379px;top:755px;width:184px;height:1px;background:#e0e0e0"></div>
<div class="ball" style="left:311.9px;top:707.8px"><span>龙</span></div>
<div class="od" style="left:380.2px;top:719.8px">1.98</div>
<div class="inp" style="left:485.0px;top:715.2px"></div>
<div class="abs" style="left:379px;top:804px;width:184px;height:1px;background:#e0e0e0"></div>
<div class="ball" style="left:311.9px;top:756.0px"><span>虎</span></div>
<div class="od" style="left:380.2px;top:768.0px">1.98</div>
<div class="inp" style="left:485.0px;top:763.4px"></div>
<div class="abs" style="left:563px;top:422px;width:1px;height:92px;background:#e9e9e9"></div>
<div class="abs" style="left:654px;top:468px;width:1px;height:330px;background:#e9e9e9"></div>
<div class="abs" style="left:746px;top:468px;width:1px;height:330px;background:#e9e9e9"></div>
<div class="abs" style="left:563.0px;top:433.2px;width:274.8px;text-align:center;font-size:20px;line-height:30px;color:#666">第三名</div>
<div class="abs" style="left:569.0px;top:479.5px;width:80px;text-align:center;font-size:20px;line-height:30px;color:#666">号码</div>
<div class="abs" style="left:660.6px;top:479.5px;width:80px;text-align:center;font-size:20px;line-height:30px;color:#666">赔率</div>
<div class="abs" style="left:752.3px;top:479.5px;width:80px;text-align:center;font-size:20px;line-height:30px;color:#666">金额</div>
<div class="abs" style="left:654px;top:562px;width:184px;height:1px;background:#e0e0e0"></div>
<div class="ball" style="left:586.7px;top:514.8px"><span>大</span></div>
<div class="od" style="left:655.0px;top:526.8px">1.98</div>
<div class="inp" style="left:759.8px;top:522.2px"></div>
<div class="abs" style="left:654px;top:611px;width:184px;height:1px;background:#e0e0e0"></div>
<div class="ball" style="left:586.7px;top:563.0px"><span>小</span></div>
<div class="od" style="left:655.0px;top:575.0px">1.98</div>
<div class="inp" style="left:759.8px;top:570.4px"></div>
<div class="abs" style="left:654px;top:659px;width:184px;height:1px;background:#e0e0e0"></div>
<div class="ball" style="left:586.7px;top:611.3px"><span>单</span></div>
<div class="od" style="left:655.0px;top:623.3px">1.98</div>
<div class="inp" style="left:759.8px;top:618.7px"></div>
<div class="abs" style="left:654px;top:707px;width:184px;height:1px;background:#e0e0e0"></div>
<div class="ball" style="left:586.7px;top:659.5px"><span>双</span></div>
<div class="od" style="left:655.0px;top:671.5px">1.98</div>
<div class="inp" style="left:759.8px;top:666.9px"></div>
<div class="abs" style="left:654px;top:755px;width:184px;height:1px;background:#e0e0e0"></div>
<div class="ball" style="left:586.7px;top:707.8px"><span>龙</span></div>
<div class="od" style="left:655.0px;top:719.8px">1.98</div>
<div class="inp" style="left:759.8px;top:715.2px"></div>
<div class="abs" style="left:654px;top:804px;width:184px;height:1px;background:#e0e0e0"></div>
<div class="ball" style="left:586.7px;top:756.0px"><span>虎</span></div>
<div class="od" style="left:655.0px;top:768.0px">1.98</div>
<div class="inp" style="left:759.8px;top:763.4px"></div>
<div class="abs" style="left:838px;top:422px;width:1px;height:92px;background:#e9e9e9"></div>
<div class="abs" style="left:929px;top:468px;width:1px;height:330px;background:#e9e9e9"></div>
<div class="abs" style="left:1021px;top:468px;width:1px;height:330px;background:#e9e9e9"></div>
<div class="abs" style="left:837.8px;top:433.2px;width:274.8px;text-align:center;font-size:20px;line-height:30px;color:#666">第四名</div>
<div class="abs" style="left:843.8px;top:479.5px;width:80px;text-align:center;font-size:20px;line-height:30px;color:#666">号码</div>
<div class="abs" style="left:935.4px;top:479.5px;width:80px;text-align:center;font-size:20px;line-height:30px;color:#666">赔率</div>
<div class="abs" style="left:1027.1px;top:479.5px;width:80px;text-align:center;font-size:20px;line-height:30px;color:#666">金额</div>
<div class="abs" style="left:929px;top:562px;width:184px;height:1px;background:#e0e0e0"></div>
<div class="ball" style="left:861.5px;top:514.8px"><span>大</span></div>
<div class="od" style="left:929.8px;top:526.8px">1.98</div>
<div class="inp" style="left:1034.6px;top:522.2px"></div>
<div class="abs" style="left:929px;top:611px;width:184px;height:1px;background:#e0e0e0"></div>
<div class="ball" style="left:861.5px;top:563.0px"><span>小</span></div>
<div class="od" style="left:929.8px;top:575.0px">1.98</div>
<div class="inp" style="left:1034.6px;top:570.4px"></div>
<div class="abs" style="left:929px;top:659px;width:184px;height:1px;background:#e0e0e0"></div>
<div class="ball" style="left:861.5px;top:611.3px"><span>单</span></div>
<div class="od" style="left:929.8px;top:623.3px">1.98</div>
<div class="inp" style="left:1034.6px;top:618.7px"></div>
<div class="abs" style="left:929px;top:707px;width:184px;height:1px;background:#e0e0e0"></div>
<div class="ball" style="left:861.5px;top:659.5px"><span>双</span></div>
<div class="od" style="left:929.8px;top:671.5px">1.98</div>
<div class="inp" style="left:1034.6px;top:666.9px"></div>
<div class="abs" style="left:929px;top:755px;width:184px;height:1px;background:#e0e0e0"></div>
<div class="ball" style="left:861.5px;top:707.8px"><span>龙</span></div>
<div class="od" style="left:929.8px;top:719.8px">1.98</div>
<div class="inp" style="left:1034.6px;top:715.2px"></div>
<div class="abs" style="left:929px;top:804px;width:184px;height:1px;background:#e0e0e0"></div>
<div class="ball" style="left:861.5px;top:756.0px"><span>虎</span></div>
<div class="od" style="left:929.8px;top:768.0px">1.98</div>
<div class="inp" style="left:1034.6px;top:763.4px"></div>
<div class="abs" style="left:1113px;top:422px;width:1px;height:92px;background:#e9e9e9"></div>
<div class="abs" style="left:1204px;top:468px;width:1px;height:330px;background:#e9e9e9"></div>
<div class="abs" style="left:1296px;top:468px;width:1px;height:330px;background:#e9e9e9"></div>
<div class="abs" style="left:1112.6px;top:433.2px;width:274.8px;text-align:center;font-size:20px;line-height:30px;color:#666">第五名</div>
<div class="abs" style="left:1118.6px;top:479.5px;width:80px;text-align:center;font-size:20px;line-height:30px;color:#666">号码</div>
<div class="abs" style="left:1210.2px;top:479.5px;width:80px;text-align:center;font-size:20px;line-height:30px;color:#666">赔率</div>
<div class="abs" style="left:1301.9px;top:479.5px;width:80px;text-align:center;font-size:20px;line-height:30px;color:#666">金额</div>
<div class="abs" style="left:1204px;top:562px;width:184px;height:1px;background:#e0e0e0"></div>
<div class="ball" style="left:1136.3px;top:514.8px"><span>大</span></div>
<div class="od" style="left:1204.6px;top:526.8px">1.98</div>
<div class="inp" style="left:1309.4px;top:522.2px"></div>
<div class="abs" style="left:1204px;top:611px;width:184px;height:1px;background:#e0e0e0"></div>
<div class="ball" style="left:1136.3px;top:563.0px"><span>小</span></div>
<div class="od" style="left:1204.6px;top:575.0px">1.98</div>
<div class="inp" style="left:1309.4px;top:570.4px"></div>
<div class="abs" style="left:1204px;top:659px;width:184px;height:1px;background:#e0e0e0"></div>
<div class="ball" style="left:1136.3px;top:611.3px"><span>单</span></div>
<div class="od" style="left:1204.6px;top:623.3px">1.98</div>
<div class="inp" style="left:1309.4px;top:618.7px"></div>
<div class="abs" style="left:1204px;top:707px;width:184px;height:1px;background:#e0e0e0"></div>
<div class="ball" style="left:1136.3px;top:659.5px"><span>双</span></div>
<div class="od" style="left:1204.6px;top:671.5px">1.98</div>
<div class="inp" style="left:1309.4px;top:666.9px"></div>
<div class="abs" style="left:1204px;top:755px;width:184px;height:1px;background:#e0e0e0"></div>
<div class="ball" style="left:1136.3px;top:707.8px"><span>龙</span></div>
<div class="od" style="left:1204.6px;top:719.8px">1.98</div>
<div class="inp" style="left:1309.4px;top:715.2px"></div>
<div class="abs" style="left:1204px;top:804px;width:184px;height:1px;background:#e0e0e0"></div>
<div class="ball" style="left:1136.3px;top:756.0px"><span>虎</span></div>
<div class="od" style="left:1204.6px;top:768.0px">1.98</div>
<div class="inp" style="left:1309.4px;top:763.4px"></div>
<div class="abs" style="left:1387px;top:422px;width:1px;height:380px;background:#e9e9e9"></div>
</div>
<svg class="abs" style="left:0;top:0;z-index:20;pointer-events:none" width="1920" height="905" viewBox="0 0 1920 905">
<defs><filter id="wmf" x="-5%" y="-20%" width="110%" height="140%"><feComponentTransfer in="SourceAlpha" result="sa"><feFuncA type="linear" slope="12"/></feComponentTransfer><feOffset in="sa" dx="1.3" dy="1.3" result="o"/><feGaussianBlur in="o" stdDeviation=".7" result="ob"/><feComposite in="ob" in2="sa" operator="out" result="edge"/><feFlood flood-color="#3c3c50" flood-opacity=".19"/><feComposite in2="edge" operator="in" result="ec"/><feMerge><feMergeNode in="ec"/><feMergeNode in="SourceGraphic"/></feMerge></filter></defs>
<g filter="url(#wmf)" font-family="Liberation Sans,sans-serif" font-weight="700" font-style="italic" font-size="48.5" fill="#fff" fill-opacity=".27" text-anchor="middle">
<text x="107.3" y="88.9" transform="rotate(26 107.3 88.9)">7w7s.com</text>
<text x="837.3" y="88.9" transform="rotate(26 837.3 88.9)">7w7s.com</text>
<text x="1567.3" y="88.9" transform="rotate(26 1567.3 88.9)">7w7s.com</text>
<text x="107.3" y="439.9" transform="rotate(26 107.3 439.9)">7w7s.com</text>
<text x="837.3" y="439.9" transform="rotate(26 837.3 439.9)">7w7s.com</text>
<text x="1567.3" y="439.9" transform="rotate(26 1567.3 439.9)">7w7s.com</text>
<text x="107.3" y="790.9" transform="rotate(26 107.3 790.9)">7w7s.com</text>
<text x="837.3" y="790.9" transform="rotate(26 837.3 790.9)">7w7s.com</text>
<text x="1567.3" y="790.9" transform="rotate(26 1567.3 790.9)">7w7s.com</text>
</g></svg>
</body></html>
